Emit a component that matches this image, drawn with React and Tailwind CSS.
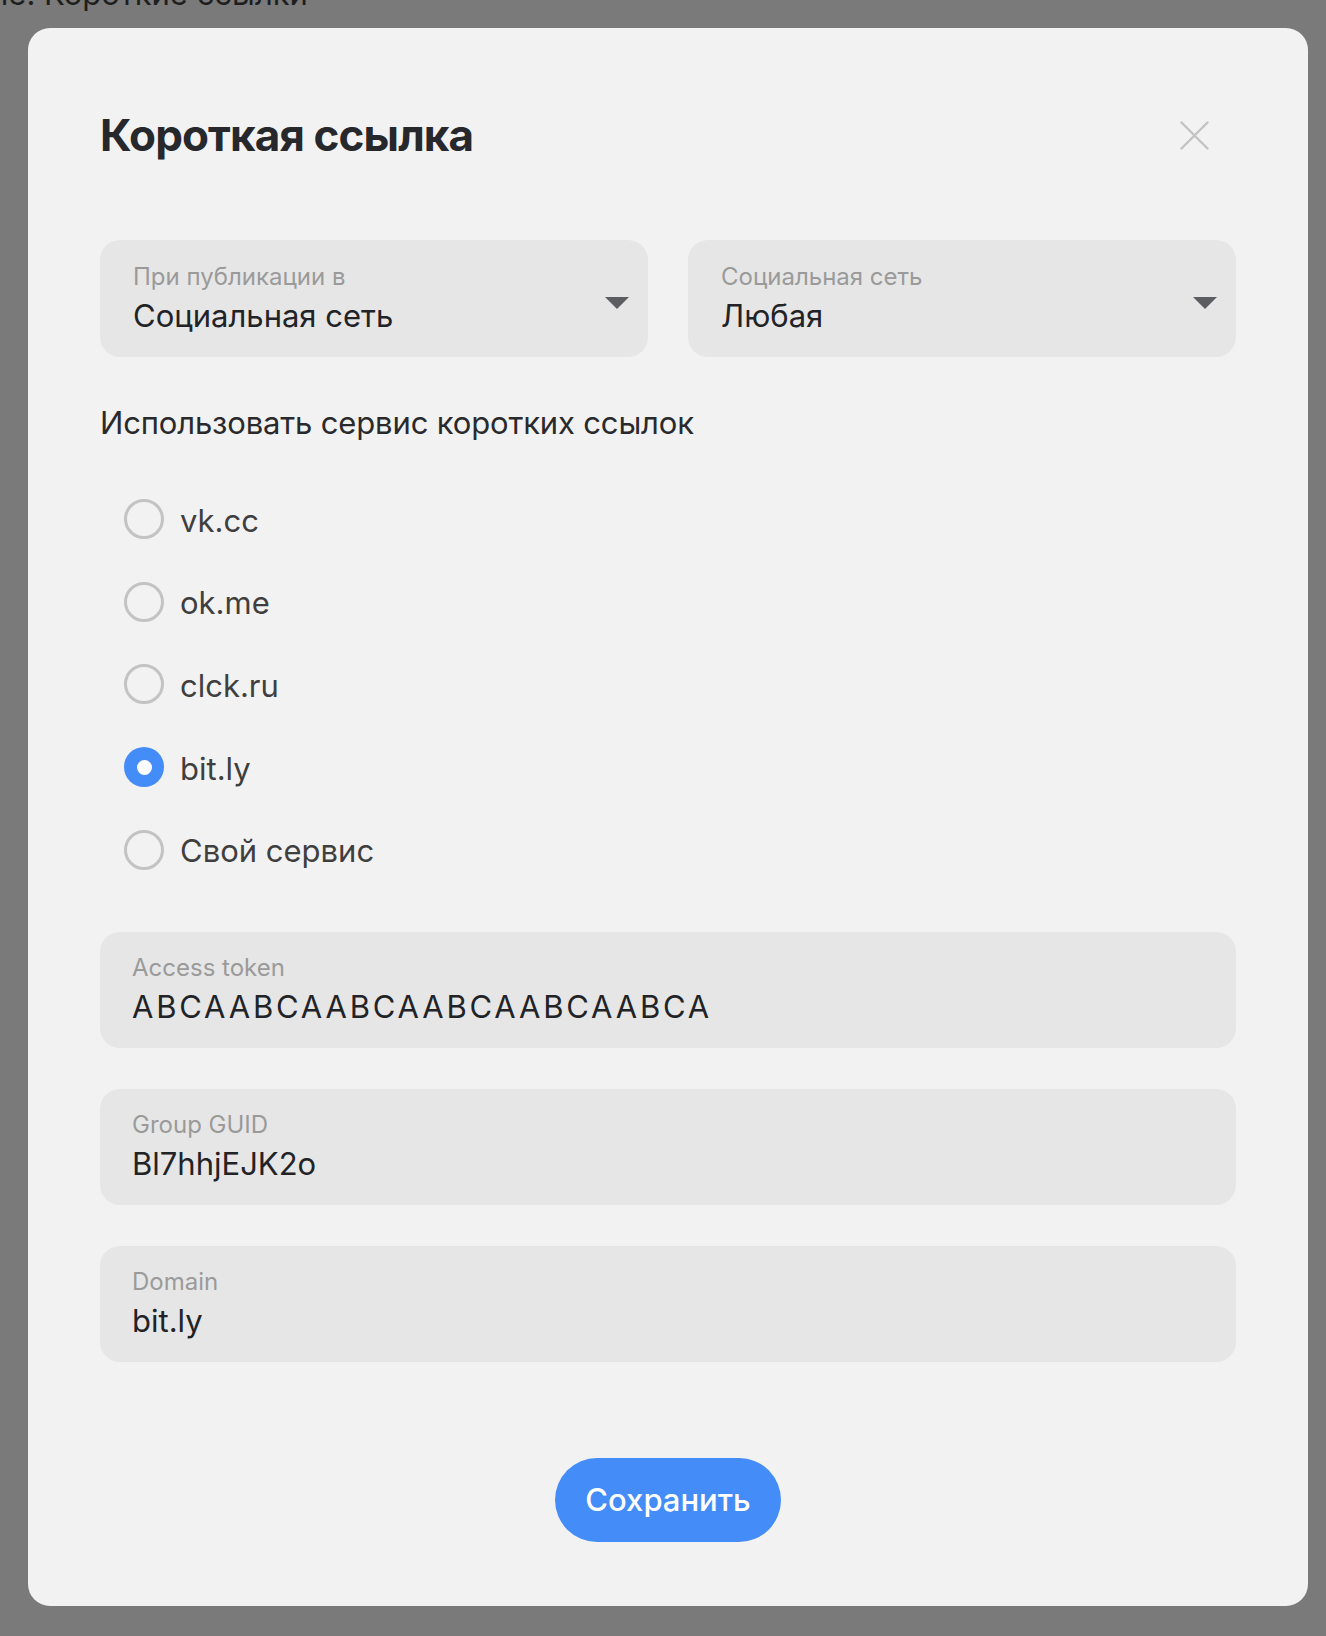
import React, { useState } from 'react';

const SERVICES = ['vk.cc', 'ok.me', 'clck.ru', 'bit.ly', 'Свой сервис'];

const FIELDS = [
  { label: 'Access token', value: 'ABCAABCAABCAABCAABCAABCA', wide: true },
  { label: 'Group GUID', value: 'Bl7hhjEJK2o' },
  { label: 'Domain', value: 'bit.ly' },
];

const Caret = () => (
  <svg width="24" height="12" viewBox="0 0 24 12" className="mt-[9px] shrink-0">
    <path d="M0 0 L24 0 L12 12 Z" fill="#5b5d61" />
  </svg>
);

const Select = ({ label, value }) => (
  <div className="flex items-center justify-between rounded-[20px] bg-[#e6e6e6] pl-[33px] pr-[19px] py-[23px]">
    <div className="flex flex-col">
      <span className="text-[24px] leading-[28px] text-[#9a9a9a]">{label}</span>
      <span className="mt-[7px] text-[31px] leading-[36px] text-[#222326]">{value}</span>
    </div>
    <Caret />
  </div>
);

const Field = ({ label, value, wide }) => (
  <div className="flex h-[116px] flex-col justify-center rounded-[20px] bg-[#e6e6e6] px-[32px]">
    <span className="text-[24px] leading-[28px] text-[#9a9a9a]">{label}</span>
    <span className={wide ? 'mt-[7px] text-[31px] leading-[36px] tracking-[2.8px] text-[#222326]' : 'mt-[7px] text-[31px] leading-[36px] text-[#222326]'}>
      {value}
    </span>
  </div>
);

const Radio = ({ label, checked, onSelect }) => (
  <button type="button" onClick={onSelect} className="flex h-[40px] items-center gap-[16px] pl-[24px] text-left">
    {checked ? (
      <span className="flex h-[40px] w-[40px] items-center justify-center rounded-full bg-[#448cf7]">
        <span className="h-[15px] w-[15px] rounded-full bg-white" />
      </span>
    ) : (
      <span className="h-[40px] w-[40px] rounded-full border-[3px] border-[#c3c3c3]" />
    )}
    <span className="mt-[3px] text-[31px] leading-[36px] text-[#3f3f3f]">{label}</span>
  </button>
);

export default function App() {
  const [service, setService] = useState('bit.ly');

  return (
    <div className="h-[1636px] w-full overflow-hidden bg-[#7a7a7a] font-['Inter','Liberation_Sans',sans-serif]">
      {/* page behind the overlay */}
      <div className="-mt-[24px] -ml-[10px] h-[36px] whitespace-nowrap text-[31px] leading-[36px] text-[#1e1e1e]">
        ие: Короткие ссылки
      </div>

      <div className="ml-[28px] mt-[16px] flex w-[1280px] flex-col rounded-[22px] bg-[#f2f2f2] px-[72px] pt-[85px] pb-[64px]">
        <div className="flex h-[44px] items-center justify-between">
          <h1 className="text-[44px] font-bold leading-[44px] tracking-[-0.02em] text-[#27282c]">Короткая ссылка</h1>
          <button type="button" className="mr-[27px] h-[29px] w-[29px]">
            <svg width="29" height="29" viewBox="0 0 29 29">
              <path d="M1.5 1.5 L27.5 27.5 M27.5 1.5 L1.5 27.5" stroke="#c3c3c3" strokeWidth="2.4" strokeLinecap="round" />
            </svg>
          </button>
        </div>

        <div className="mt-[83px] grid grid-cols-2 gap-[40px]">
          <Select label="При публикации в" value="Социальная сеть" />
          <Select label="Социальная сеть" value="Любая" />
        </div>

        <div className="mt-[48px] text-[31px] leading-[36px] tracking-[-0.005em] text-[#2a2a2c]">
          Использовать сервис коротких ссылок
        </div>

        <div className="mt-[58px] flex flex-col gap-[42.7px]">
          {SERVICES.map(s => (
            <Radio key={s} label={s} checked={service === s} onSelect={() => setService(s)} />
          ))}
        </div>

        <div className="mt-[62px] flex flex-col gap-[41px]">
          {FIELDS.map(f => (
            <Field key={f.label} label={f.label} value={f.value} wide={f.wide} />
          ))}
        </div>

        <div className="mt-[96px] flex justify-center">
          <button type="button" className="flex h-[84px] w-[226px] items-center justify-center rounded-full bg-[#448cf7] text-[31px] font-medium text-white">
            Сохранить
          </button>
        </div>
      </div>
    </div>
  );
}
